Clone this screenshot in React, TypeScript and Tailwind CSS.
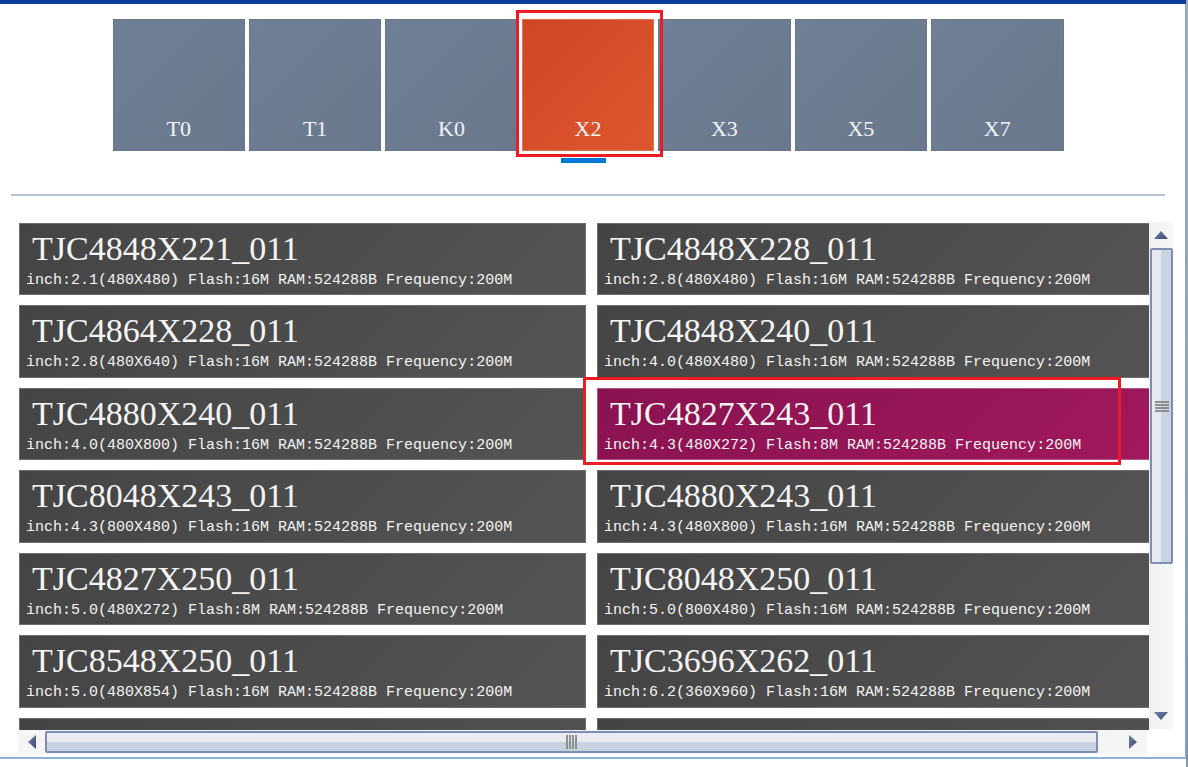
import { useState } from "react";

const series = ["T0", "T1", "K0", "X2", "X3", "X5", "X7"];

type Device = { name: string; inch: string; res: string; flash: string };

const devices: Device[] = [
  { name: "TJC4848X221_011", inch: "2.1", res: "480X480", flash: "16M" },
  { name: "TJC4848X228_011", inch: "2.8", res: "480X480", flash: "16M" },
  { name: "TJC4864X228_011", inch: "2.8", res: "480X640", flash: "16M" },
  { name: "TJC4848X240_011", inch: "4.0", res: "480X480", flash: "16M" },
  { name: "TJC4880X240_011", inch: "4.0", res: "480X800", flash: "16M" },
  { name: "TJC4827X243_011", inch: "4.3", res: "480X272", flash: "8M" },
  { name: "TJC8048X243_011", inch: "4.3", res: "800X480", flash: "16M" },
  { name: "TJC4880X243_011", inch: "4.3", res: "480X800", flash: "16M" },
  { name: "TJC4827X250_011", inch: "5.0", res: "480X272", flash: "8M" },
  { name: "TJC8048X250_011", inch: "5.0", res: "800X480", flash: "16M" },
  { name: "TJC8548X250_011", inch: "5.0", res: "480X854", flash: "16M" },
  { name: "TJC3696X262_011", inch: "6.2", res: "360X960", flash: "16M" },
];

function SeriesTab({ label, active, onSelect }: { label: string; active: boolean; onSelect: () => void }) {
  return (
    <div className="relative">
      <button
        type="button"
        onClick={onSelect}
        className={
          "flex h-[132px] w-full items-end justify-center border pb-[6px] text-[22px] leading-[30px] text-[#f1f3f5] " +
          (active
            ? "border-[#e0734f] bg-linear-[135deg] from-[#d14524] to-[#dc582f]"
            : "border-[#69778a] bg-linear-[135deg] from-[#6f7f95] to-[#69788d]")
        }
      >
        {label}
      </button>
      {active && (
        <>
          <span className="absolute top-[139px] left-1/2 h-[5px] w-[45px] -translate-x-[27px] bg-[#0078d7]" />
          <span className="pointer-events-none absolute -top-[9px] -right-[9px] -bottom-[6px] -left-[6px] z-10 border-3 border-[#ed1c24]" />
        </>
      )}
    </div>
  );
}

function DeviceCard({ device, active, onSelect }: { device: Device; active: boolean; onSelect: () => void }) {
  return (
    <div className="relative">
      <button
        type="button"
        onClick={onSelect}
        className={
          "flex h-full w-full flex-col items-start border pt-[5px] text-left whitespace-nowrap text-[#f4f4f4] " +
          (active
            ? "border-[#b0578a] bg-linear-[135deg] from-[#8a1250] to-[#a0195c]"
            : "border-[#6e6e6e] bg-linear-[135deg] from-[#444444] to-[#545454]")
        }
      >
        <span className="pl-[12px] text-[34px] leading-[40px]">{device.name}</span>
        <span className="pl-[6px] font-['Liberation_Mono',monospace] text-[15px] leading-[24px]">
          inch:{device.inch}({device.res}) Flash:{device.flash} RAM:524288B Frequency:200M
        </span>
      </button>
      {active && (
        <span className="pointer-events-none absolute -top-[11px] right-[43px] -bottom-[5px] -left-[14px] z-10 border-3 border-[#ed1c24]" />
      )}
    </div>
  );
}

function Arrow({ points }: { points: string }) {
  return (
    <svg width="14" height="14" viewBox="0 0 14 14" aria-hidden="true">
      <defs>
        <linearGradient id="arrow" x1="0" y1="0" x2="1" y2="1">
          <stop offset="0" stopColor="#7080a8" />
          <stop offset="1" stopColor="#3a4a72" />
        </linearGradient>
      </defs>
      <polygon points={points} fill="url(#arrow)" />
    </svg>
  );
}

export default function App() {
  const [activeSeries, setActiveSeries] = useState("X2");
  const [activeDevice, setActiveDevice] = useState("TJC4827X243_011");

  return (
    <div className="min-h-screen bg-white font-['Liberation_Serif',serif]">
      <div className="flex">
        <div className="min-w-0 flex-1">
          <div className="h-[4px] bg-[#083a9a]" />
          <main className="border-r border-b-2 border-r-[#8aa6d8] border-b-[#8db0dc] pr-[12px] pb-[3px] pl-[11px]">
            <nav className="pt-[15px] pr-[8px]">
              <div className="mx-auto grid max-w-[951px] grid-cols-7 gap-[4px]">
                {series.map((s) => (
                  <SeriesTab key={s} label={s} active={s === activeSeries} onSelect={() => setActiveSeries(s)} />
                ))}
              </div>
              <hr className="mt-[43px] border-t-2 border-[#b4c6dc]" />
            </nav>

            <section className="mt-[26px] flex pl-[7px]">
              <div className="min-w-0 flex-1">
                <div className="ml-px h-[508px] overflow-hidden pt-px">
                  <div className="grid h-[567px] w-[calc(100%+15px)] grid-cols-2 grid-rows-[repeat(7,1fr)] gap-x-[11px] gap-y-[10px]">
                    {devices.map((d) => (
                      <DeviceCard
                        key={d.name}
                        device={d}
                        active={d.name === activeDevice}
                        onSelect={() => setActiveDevice(d.name)}
                      />
                    ))}
                    <div className="border border-[#6e6e6e] bg-linear-to-r from-[#444444] to-[#505050]" />
                    <div className="border border-[#6e6e6e] bg-linear-to-r from-[#444444] to-[#505050]" />
                  </div>
                </div>
                <div className="mr-[2px] flex h-[24px] items-stretch bg-[#f5f5f5]">
                  <button type="button" aria-label="Scroll left" className="flex w-[27px] items-center justify-center">
                    <Arrow points="3,7 11,0 11,14" />
                  </button>
                  <div className="my-px flex flex-1 items-center justify-center gap-[1px] rounded-[2px] border-2 border-[#7d8db3] bg-linear-to-b from-[#e9ecf2] from-50% to-[#c7d2e0] to-50%">
                    <span className="h-[14px] w-[2px] bg-[#8f8f8f]" />
                    <span className="h-[14px] w-[2px] bg-[#8f8f8f]" />
                    <span className="h-[14px] w-[2px] bg-[#8f8f8f]" />
                    <span className="h-[14px] w-[2px] bg-[#8f8f8f]" />
                  </div>
                  <div className="flex w-[49px] items-center justify-end pr-[7px]">
                    <button type="button" aria-label="Scroll right" className="flex">
                      <Arrow points="3,0 11,7 3,14" />
                    </button>
                  </div>
                </div>
              </div>
              <div className="flex h-[507px] w-[24px] flex-col bg-linear-to-r from-[#f0f0f0] to-[#f8f8f8]">
                <button type="button" aria-label="Scroll up" className="flex h-[26px] items-center justify-center">
                  <Arrow points="0,11 7,3 14,11" />
                </button>
                <div className="ml-px flex h-[316px] flex-col items-center justify-center gap-[1px] rounded-[2px] border-2 border-[#7d8db3] bg-linear-to-r from-[#e6eaf0] from-50% to-[#c7d4e2] to-50%">
                  <span className="h-[2px] w-[14px] bg-[#8f8f8f]" />
                  <span className="h-[2px] w-[14px] bg-[#8f8f8f]" />
                  <span className="h-[2px] w-[14px] bg-[#8f8f8f]" />
                  <span className="h-[2px] w-[14px] bg-[#8f8f8f]" />
                </div>
                <button type="button" aria-label="Scroll down" className="mt-auto flex h-[26px] items-center justify-center">
                  <Arrow points="0,3 14,3 7,11" />
                </button>
              </div>
            </section>
          </main>
        </div>
        <div className="min-h-screen w-[2px] bg-linear-to-b from-[#a4acb8] to-[#8494b0]" />
      </div>
    </div>
  );
}
